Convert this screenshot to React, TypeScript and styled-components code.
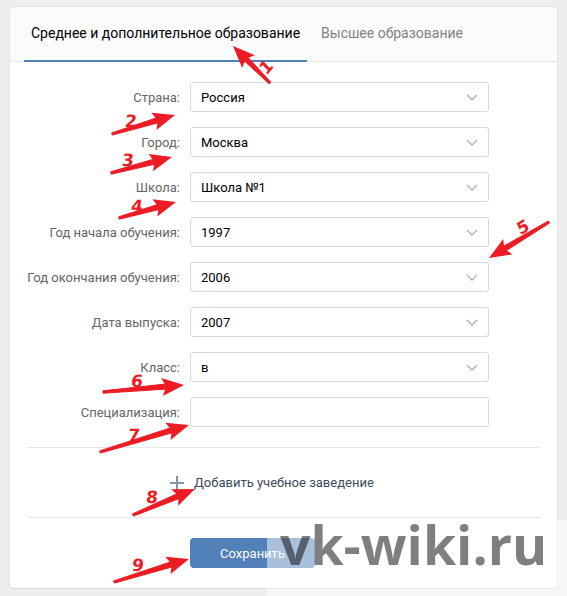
import React from 'react';
import styled, { createGlobalStyle } from 'styled-components';

const Global = createGlobalStyle`
  html, body { margin: 0; padding: 0; background: #edeef0; }
  body { font-family: Roboto, "Open Sans", Arial, sans-serif; -webkit-font-smoothing: antialiased; }
  #root { width: 567px; height: 596px; }
`;

const Page = styled.div`
  position: relative;
  width: 567px;
  height: 596px;
  box-sizing: border-box;
  padding: 7px 10px 9px 10px;
  overflow: hidden;
`;

const Card = styled.div`
  background: #fff;
  border-radius: 4px;
  box-shadow: 0 1px 0 0 #d7d8db, 0 0 0 1px #e3e4e8;
  overflow: hidden;
`;

const Tabs = styled.div`
  display: flex;
  height: 54px;
  padding: 0 14px;
  background: #fafbfc;
  border-bottom: 1px solid #e7e8ec;
`;

const Tab = styled.div<{ $active?: boolean }>`
  display: flex;
  align-items: center;
  padding: 0 7px 2px;
  margin-right: 7px;
  margin-bottom: -1px;
  font-size: 14px;
  color: ${p => (p.$active ? '#000' : '#828282')};
  border-bottom: 2px solid ${p => (p.$active ? '#5181b8' : 'transparent')};
`;

const Form = styled.div`
  display: flex;
  flex-direction: column;
  gap: 15px;
  padding: 20px 0 20px;
`;

const Row = styled.div`
  display: grid;
  grid-template-columns: 170px 299px;
  column-gap: 10px;
  align-items: center;
  height: 30px;
`;

const Label = styled.div`
  text-align: right;
  font-size: 13px;
  color: #656565;
`;

const Field = styled.div`
  box-sizing: border-box;
  height: 30px;
  display: flex;
  align-items: center;
  justify-content: space-between;
  padding: 0 10px 0 10px;
  border: 1px solid #d3d9de;
  border-radius: 3px;
  background: #fff;
  font-size: 13px;
  color: #000;
`;

const Divider = styled.div`
  height: 1px;
  background: #e7e8ec;
  margin: 0 16px 0 18px;
`;

const AddRow = styled.div`
  display: flex;
  align-items: center;
  gap: 10px;
  height: 69px;
  padding-left: 160px;
  font-size: 13px;
  color: #3b4a5a;
`;

const Footer = styled.div`
  padding: 20px 0 20px 180px;
`;

const Button = styled.div`
  display: inline-flex;
  align-items: center;
  justify-content: center;
  height: 30px;
  width: 125px;
  border-radius: 4px;
  background: #5181b8;
  color: #fff;
  font-size: 13px;
`;

const Veil = styled.div`
  position: absolute;
  left: 267px;
  top: 520px;
  right: 0;
  bottom: 0;
  background: rgba(255, 255, 255, 0.5);
`;

const Watermark = styled.div`
  position: absolute;
  left: 280px;
  top: 518px;
  font-family: "Open Sans", sans-serif;
  font-weight: 700;
  font-size: 53.5px;
  line-height: 53.5px;
  color: rgba(0, 0, 0, 0.5);
  white-space: nowrap;
`;

const Marks = styled.svg`
  position: absolute;
  left: 0;
  top: 0;
  pointer-events: none;
`;

const Chevron = () => (
  <svg width="12" height="7" viewBox="0 0 12 7">
    <path d="M1 1l5 5 5-5" fill="none" stroke="#a9b0b8" strokeWidth="1.3" />
  </svg>
);

const Plus = () => (
  <svg width="14" height="14" viewBox="0 0 14 14">
    <path d="M7 0v14M0 7h14" stroke="#7b94b0" strokeWidth="2" />
  </svg>
);

type Arrow = { t: [number, number]; h: [number, number]; n: string; p: [number, number]; r?: number };

const arrows: Arrow[] = [
  { t: [270, 83], h: [233, 46], n: '1', p: [266, 67], r: -50 },
  { t: [112, 134], h: [175, 115], n: '2', p: [131, 121] },
  { t: [111, 173], h: [172, 157], n: '3', p: [128, 160] },
  { t: [119, 218], h: [176, 202], n: '4', p: [137, 206] },
  { t: [549, 222], h: [489, 258], n: '5', p: [523, 227], r: -30 },
  { t: [103, 392], h: [184, 385], n: '6', p: [137, 381] },
  { t: [100, 452], h: [189, 425], n: '7', p: [134, 435] },
  { t: [133, 515], h: [195, 489], n: '8', p: [152, 497] },
  { t: [114, 582], h: [189, 559], n: '9', p: [138, 565] },
];

const arrowPolys = (a: Arrow) => {
  const [x1, y1] = a.t;
  const [x2, y2] = a.h;
  const dx = x2 - x1;
  const dy = y2 - y1;
  const len = Math.hypot(dx, dy);
  const ux = dx / len;
  const uy = dy / len;
  const nx = -uy;
  const ny = ux;
  const hl = 22;
  const hw = 9;
  const bx = x2 - ux * hl;
  const by = y2 - uy * hl;
  const nbx = x2 - ux * (hl - 4);
  const nby = y2 - uy * (hl - 4);
  const shaft = [
    [x1 + nx * 1.2, y1 + ny * 1.2],
    [nbx + nx * 2.6, nby + ny * 2.6],
    [nbx - nx * 2.6, nby - ny * 2.6],
    [x1 - nx * 1.2, y1 - ny * 1.2],
  ];
  const head = [
    [x2, y2],
    [bx + nx * hw, by + ny * hw],
    [nbx, nby],
    [bx - nx * hw, by - ny * hw],
  ];
  const s = (pts: number[][]) => pts.map(p => p.map(v => v.toFixed(1)).join(',')).join(' ');
  return { shaft: s(shaft), head: s(head) };
};

const rows: { label: string; value?: string }[] = [
  { label: 'Страна:', value: 'Россия' },
  { label: 'Город:', value: 'Москва' },
  { label: 'Школа:', value: 'Школа №1' },
  { label: 'Год начала обучения:', value: '1997' },
  { label: 'Год окончания обучения:', value: '2006' },
  { label: 'Дата выпуска:', value: '2007' },
  { label: 'Класс:', value: 'в' },
  { label: 'Специализация:' },
];

export default function App() {
  return (
    <>
      <Global />
      <Page>
        <Card>
          <Tabs>
            <Tab $active>Среднее и дополнительное образование</Tab>
            <Tab>Высшее образование</Tab>
          </Tabs>
          <Form>
            {rows.map(r => (
              <Row key={r.label}>
                <Label>{r.label}</Label>
                <Field>
                  <span>{r.value ?? ''}</span>
                  {r.value !== undefined && <Chevron />}
                </Field>
              </Row>
            ))}
          </Form>
          <Divider />
          <AddRow>
            <Plus />
            <span>Добавить учебное заведение</span>
          </AddRow>
          <Divider />
          <Footer>
            <Button>Сохранить</Button>
          </Footer>
        </Card>
        <Veil />
        <Watermark>vk-wiki.ru</Watermark>
        <Marks width="567" height="596" viewBox="0 0 567 596">
          {arrows.map(a => {
            const { shaft, head } = arrowPolys(a);
            return (
              <g key={a.n} fill="#ed1c24">
                <polygon points={shaft} strokeLinejoin="round" stroke="#ed1c24" strokeWidth="1" />
                <polygon points={head} />
                <text
                  x={0}
                  y={6}
                  textAnchor="middle"
                  fontFamily="'DejaVu Sans', sans-serif"
                  fontWeight="bold"
                  fontSize="17"
                  transform={`translate(${a.p[0]} ${a.p[1]}) rotate(${a.r ?? 0}) skewX(-6)`}
                >
                  {a.n}
                </text>
              </g>
            );
          })}
        </Marks>
      </Page>
    </>
  );
}
